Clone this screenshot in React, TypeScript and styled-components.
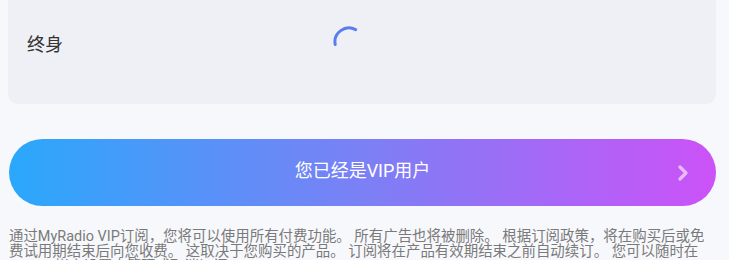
import React from 'react'
import styled, { createGlobalStyle } from 'styled-components'

const GlobalStyle = createGlobalStyle`
  html, body {
    margin: 0;
    padding: 0;
    background: #f7f8fc;
    font-family: Roboto, "Noto Sans CJK SC", sans-serif;
  }
`

const Page = styled.div`
  width: 729px;
  height: 260px;
  overflow: hidden;
  box-sizing: border-box;
  padding: 0 13px 0 8px;
  background: #f7f8fc;
`

const PlanCard = styled.div`
  margin-top: -20px;
  height: 124px;
  box-sizing: border-box;
  padding: 0 0 0 19px;
  border-radius: 10px;
  background: #eff0f5;
  display: flex;
  align-items: center;
`

const PlanName = styled.span`
  font-size: 18px;
  color: #333;
  width: 36px;
  margin-top: 1px;
`

const Spinner = styled.div`
  margin-left: 269px;
  width: 34px;
  height: 34px;
  display: flex;
  align-items: center;
  justify-content: center;
`

const VipButton = styled.button`
  position: relative;
  margin: 35px 0 0 1px;
  width: 707px;
  height: 67px;
  border: 0;
  border-radius: 34px;
  background: linear-gradient(90deg, #2aa8fb 0%, #7b80f5 50%, #cc52f7 100%);
  color: #fff;
  font-family: Roboto, "Noto Sans CJK SC", sans-serif;
  font-size: 18px;
  display: flex;
  align-items: center;
  justify-content: center;
  padding: 0 0 8px;
  cursor: pointer;
`

const Chevron = styled.span`
  position: absolute;
  right: 26px;
  top: 50%;
  transform: translateY(-50%);
  display: flex;
  opacity: 0.6;
`

const Notice = styled.p`
  margin: 23px 0 0 1px;
  width: 707px;
  font-size: 14.45px;
  line-height: 15px;
  color: #7a7a7a;
`

const App: React.FC = () => {
  return (
    <Page>
      <GlobalStyle />
      <PlanCard>
        <PlanName>终身</PlanName>
        <Spinner>
          <svg width="34" height="34" viewBox="0 0 34 34">
            <path
              d="M3.2 19.5 A14 14 0 0 1 23.6 4.6"
              fill="none"
              stroke="#5a7cf0"
              strokeWidth="3"
              strokeLinecap="round"
            />
          </svg>
        </Spinner>
      </PlanCard>
      <VipButton>
        您已经是VIP用户
        <Chevron>
          <svg width="14" height="18" viewBox="0 0 14 18">
            <path
              d="M4 3 L10 9 L4 15"
              fill="none"
              stroke="#fff"
              strokeWidth="3.2"
              strokeLinecap="round"
              strokeLinejoin="round"
            />
          </svg>
        </Chevron>
      </VipButton>
      <Notice>
        通过MyRadio VIP订阅，您将可以使用所有付费功能。 所有广告也将被删除。 根据订阅政策，将在购买后或免费试用期结束后向您收费。 这取决于您购买的产品。 订阅将在产品有效期结束之前自动续订。 您可以随时在Google帐户设置中管理或取消订阅。
      </Notice>
    </Page>
  )
}

export default App
